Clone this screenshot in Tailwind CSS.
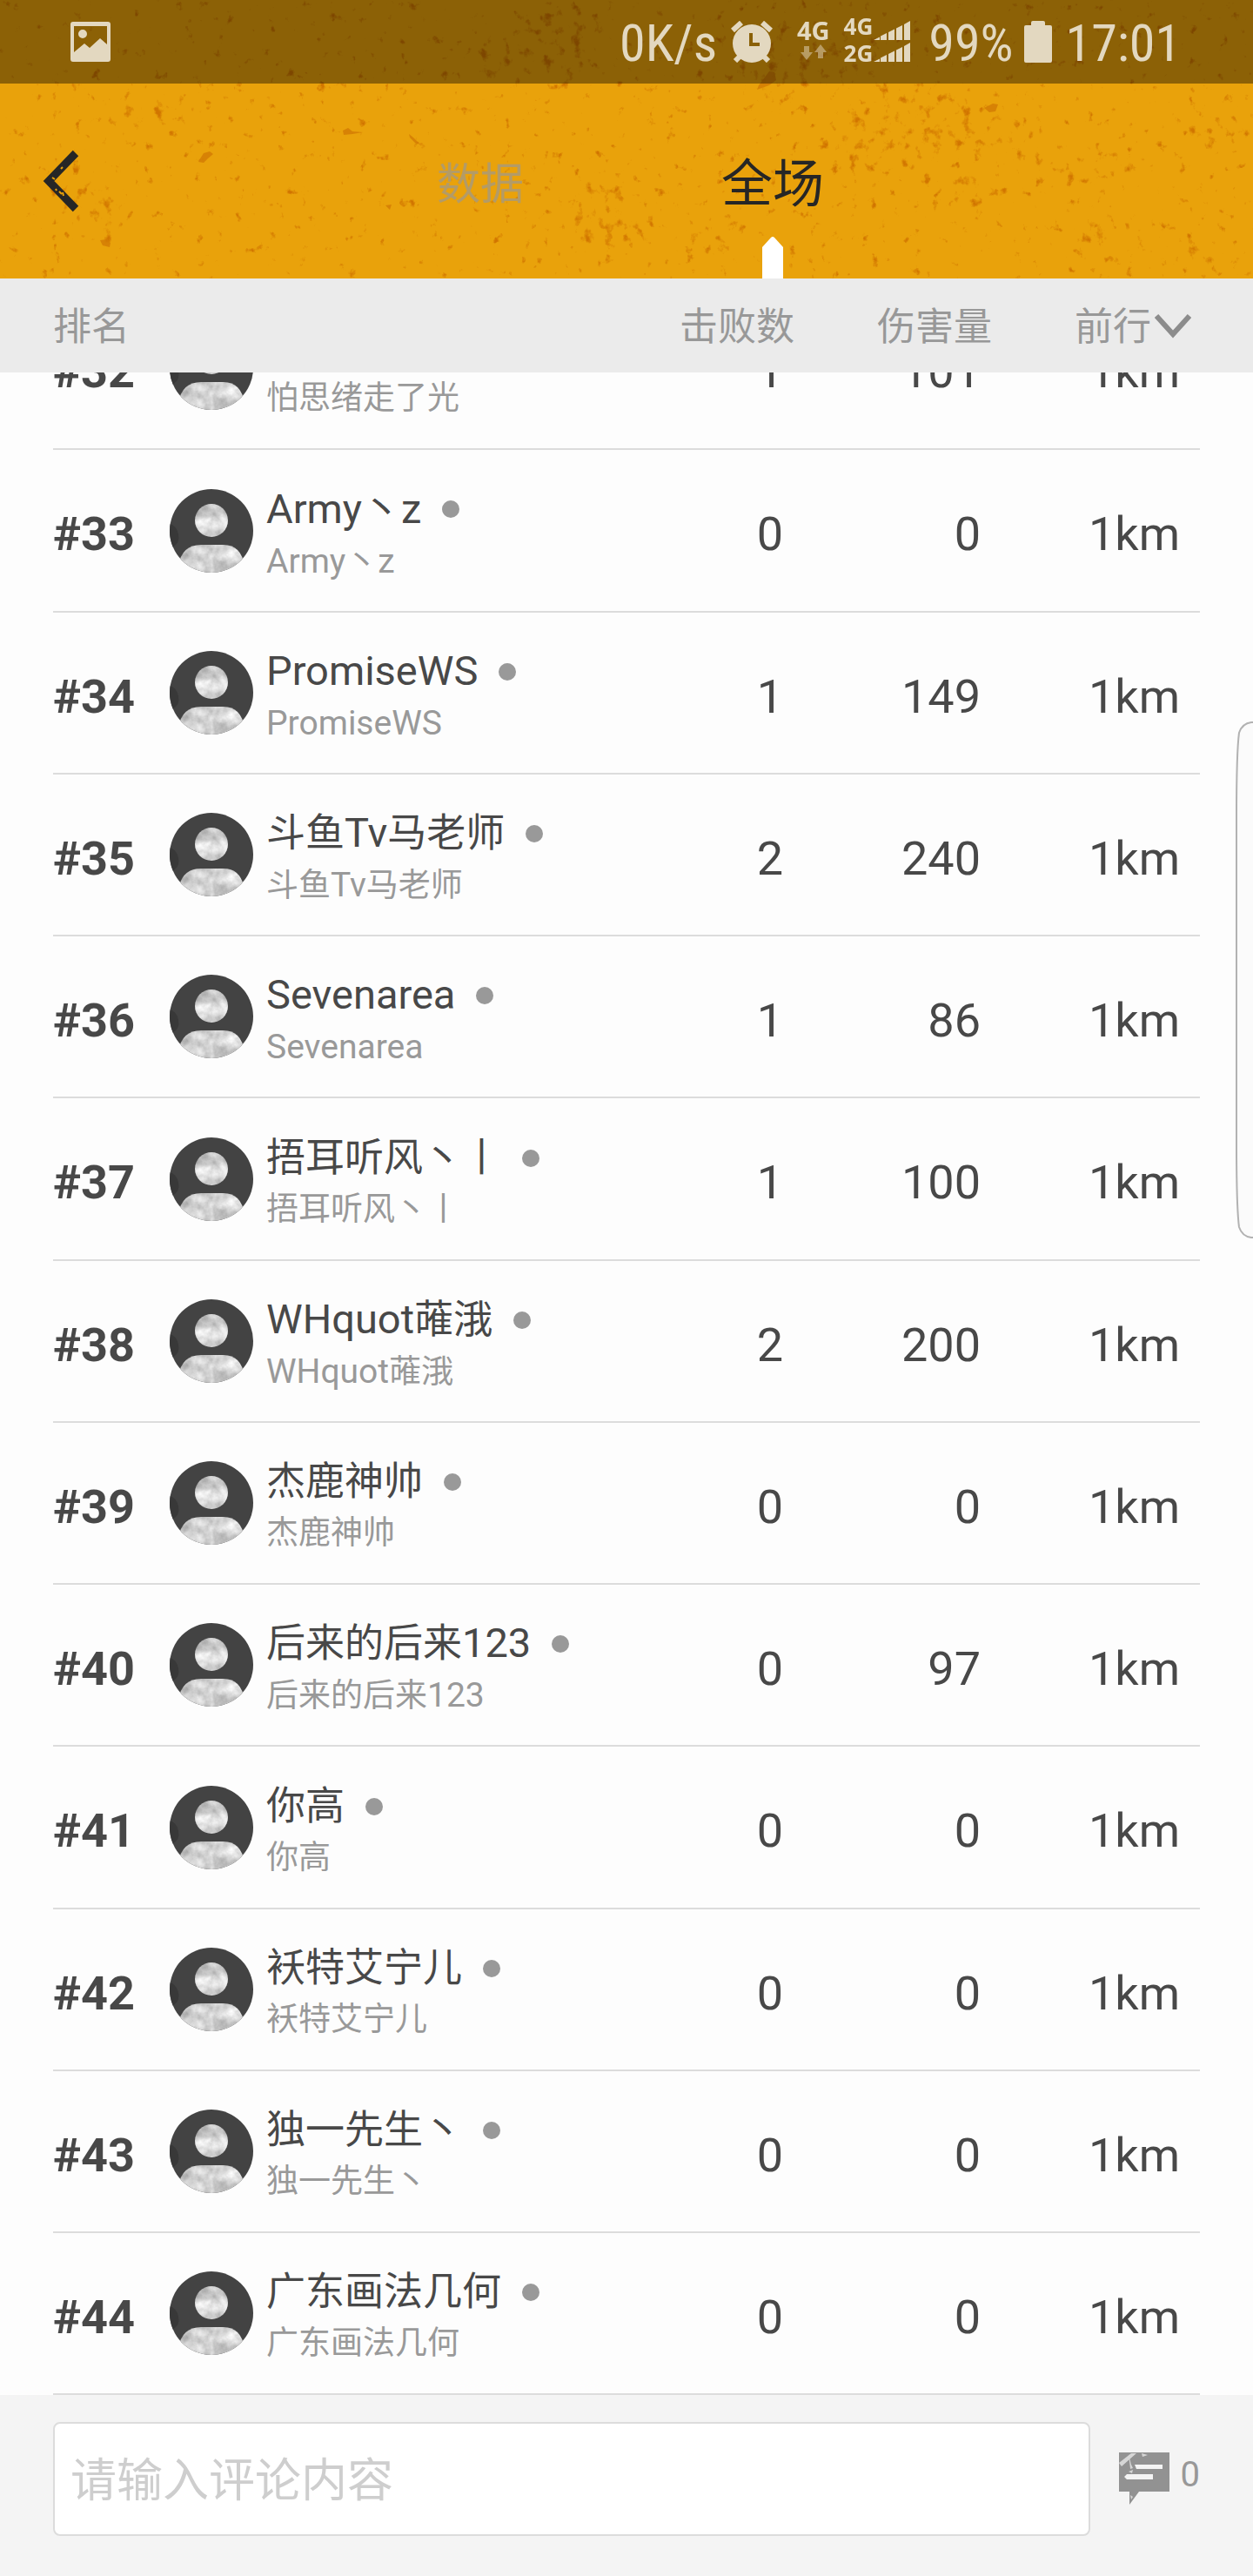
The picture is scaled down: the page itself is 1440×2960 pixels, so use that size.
<!DOCTYPE html>
<html lang="zh-CN">
<head>
  <meta charset="UTF-8" />
  <meta name="viewport" content="width=device-width, initial-scale=1.0" />
  <title>全场</title>
  <script src="https://cdn.jsdelivr.net/npm/@tailwindcss/browser@4"></script>
</head>
<body class="h-screen flex flex-col overflow-hidden bg-[#fdfdfd] text-[#484848] font-['Roboto','Noto_Sans_CJK_SC',sans-serif]">

  <!-- Header Start -->
  <header class="relative shrink-0 bg-[#e9a20b]">
    <!-- grunge texture: the ellipses mark where the scratches are denser -->
    <svg class="absolute inset-0 w-full h-full" viewBox="0 0 1440 320" preserveAspectRatio="none" aria-hidden="true">
      <filter id="grunge" filterUnits="userSpaceOnUse" x="0" y="0" width="1440" height="320" color-interpolation-filters="sRGB">
        <feGaussianBlur in="SourceGraphic" stdDeviation="12" result="density" />
        <feTurbulence type="fractalNoise" baseFrequency="0.085 0.075" numOctaves="4" seed="8" result="fine" />
        <feComposite in="fine" in2="density" operator="arithmetic" k1="0" k2="1" k3="0.2" k4="0" />
        <feColorMatrix type="matrix" values="0 0 0 0 0.82  0 0 0 0 0.46  0 0 0 0 0  6 0 0 0 -4.2" />
      </filter>
      <g filter="url(#grunge)" fill="#fff">
        <ellipse cx="1035" cy="150" rx="80" ry="50" transform="rotate(-20 1035 150)" />
        <ellipse cx="1125" cy="152" rx="70" ry="22" transform="rotate(12 1125 152)" />
        <ellipse cx="1250" cy="195" rx="80" ry="18" />
        <ellipse cx="1120" cy="215" rx="40" ry="20" />
        <ellipse cx="885" cy="75" rx="40" ry="50" />
        <ellipse cx="960" cy="70" rx="40" ry="30" />
        <ellipse cx="640" cy="50" rx="50" ry="50" />
        <ellipse cx="570" cy="70" rx="40" ry="20" />
        <ellipse cx="100" cy="235" rx="50" ry="26" transform="rotate(25 100 235)" />
        <ellipse cx="180" cy="125" rx="70" ry="14" />
        <ellipse cx="700" cy="245" rx="50" ry="46" />
        <ellipse cx="820" cy="270" rx="34" ry="22" />
        <ellipse cx="1260" cy="275" rx="34" ry="26" />
        <ellipse cx="1400" cy="150" rx="40" ry="24" />
        <ellipse cx="1380" cy="295" rx="40" ry="14" />
      </g>
      <g fill="#d27a04" fill-opacity="0.8">
        <path d="M229 184l5-8 7-2 4 3-6 5-5 5-6-1zM394 150l6-3 5 4 12 1-12 2-10 1zM115 276l8-1 4 4-1 5-8-2zM470 154l5 4 8 8-6-2-6-6zM443 236l7-1-2 6zM1131 124l10-5 6 1-3 8-7 1zM872 98l12-16 6 1 2 9-8 6-14 5z" />
      </g>
    </svg>

    <!-- Status bar -->
    <div class="relative h-24 bg-black/40 flex items-center pl-20 pr-[83px] text-[#e3d8c0] text-[60px] leading-none font-['Roboto_Condensed','Roboto',sans-serif]">
      <svg class="w-12 h-12" viewBox="0 0 48 48" fill="currentColor">
        <path fill-rule="evenodd" d="M4 1h40a3 3 0 0 1 3 3v40a3 3 0 0 1-3 3H4a3 3 0 0 1-3-3V4a3 3 0 0 1 3-3zM5 6v30l12-10 6 5 12-11 8 7V6zM15 10a5 5 0 1 1 0 10a5 5 0 0 1 0-10z" />
      </svg>
      <span class="ml-auto pt-1">0K/s</span>
      <!-- alarm -->
      <svg class="ml-4 w-12 h-12" viewBox="0 0 48 48" fill="none" stroke="currentColor" stroke-width="6">
        <path d="M2 11 12 2M36 2l10 9M5 46l8-8M43 46l-8-8" />
        <circle cx="24" cy="26" r="22" fill="currentColor" stroke="none" />
        <path d="M23 14v13h10" stroke="#8a6007" stroke-width="4" />
      </svg>
      <!-- mobile signal, two SIMs -->
      <div class="ml-7 pb-2 flex flex-col items-center font-['Noto_Sans'] font-bold text-[29px]">
        <span class="leading-8">4G</span>
        <svg class="w-[30px] h-[18px] opacity-50" viewBox="0 0 30 18" fill="currentColor">
          <path d="M4 2h6v7h4l-7 9-7-9h4zM20 16V9h-4l7-9 7 9h-4v7z" />
        </svg>
      </div>
      <div class="ml-4 pb-1 flex flex-col font-['Noto_Sans'] font-bold text-[26px] leading-[31px]">
        <span>4G</span>
        <span>2G</span>
      </div>
      <svg class="w-[44px] h-12" viewBox="0 0 44 48" fill="currentColor">
        <path d="M1 22 8 18.500v3.500zM9 22v-4.500l7-3.500v8zM18 22v-9l7-3.500V22zM27 22V8.500l7-3.500v17zM36 22V4l7-4v22z" />
        <path d="M1 47 8 43.500v3.500zM9 47v-4.500l7-3.500v8zM18 47v-9l7-3.500V47zM27 47V33.500l7-3.500v17zM36 47V29l7-4v22z" />
      </svg>
      <span class="ml-5 pt-1">99%</span>
      <!-- battery -->
      <svg class="ml-3 w-8 h-12" viewBox="0 0 32 48" fill="currentColor"><path d="M10 0h12q2 0 2 2v3h6q2 0 2 2v39q0 2-2 2H2q-2 0-2-2V7q0-2 2-2h6V2q0-2 2-2z" /></svg>
      <span class="ml-4 pt-1">17:01</span>
    </div>

    <!-- Tabs -->
    <nav class="relative h-56 flex justify-center">
      <button id="backBtn" class="absolute left-12 inset-y-0" aria-label="返回">
        <svg class="w-11 h-[72px]" viewBox="0 0 44 72" fill="none" stroke="#262626" stroke-width="9">
          <path d="M39 4 8 36l31 32" />
          <path d="M12 32l3 2M22 22l2-2M20 48l3 3M25 53l-1-4M16 45l1 2" stroke="#e9a20b" stroke-width="2" />
        </svg>
      </button>
      <a href="#data" class="w-84 pt-2 flex items-center justify-center text-[50px] text-[#b39b67]">数据</a>
      <a href="#all" class="relative w-84 pt-2 flex items-center justify-center text-[59px] text-[#262626]" aria-current="page">全场
        <svg class="absolute bottom-0 w-6 h-12" viewBox="0 0 24 48" fill="#fff"><path d="M0 12 10 1q2-2 4 0l10 11v36H0z" /></svg>
      </a>
    </nav>
  </header>
  <!-- Header End -->

  <!-- Column titles -->
  <div class="shrink-0 h-27 pt-1 bg-[#ebebeb] pl-[61px] pr-[71px] flex items-center text-[44px] text-[#989898]">
    <span class="flex-1">排名</span>
    <span>击败数</span>
    <span class="w-[227px] text-right">伤害量</span>
    <button id="sortBtn" class="w-[229px] flex items-center justify-end gap-1">前行
      <svg class="w-[42px] h-8" viewBox="0 0 42 32" fill="none" stroke="#8c8c8c" stroke-width="6"><path d="M2 3l19 21L40 3" /></svg>
    </button>
  </div>

  <!-- Player list -->
  <main class="flex-1 min-h-0 overflow-hidden flex flex-col justify-end px-[61px]">
    <table class="w-full table-fixed border-collapse">
      <colgroup>
        <col class="w-[134px]" />
        <col class="w-[111px]" />
        <col />
        <col class="w-[120px]" />
        <col class="w-[227px]" />
        <col class="w-[252px]" />
      </colgroup>
      <tbody id="players"></tbody>
    </table>
  </main>

  <!-- Comment bar -->
  <footer class="shrink-0 h-52 bg-[#f4f4f4] px-[61px] pb-4 flex items-center">
    <input id="comment" type="text" aria-label="评论" placeholder="请输入评论内容"
      class="flex-1 h-[131px] pt-1.5 pl-[18px] border-2 border-[#dcdcdc] rounded-lg bg-white text-[53px] placeholder:text-[#cecece] focus:outline-none" />
    <button id="commentsBtn" class="ml-8 flex items-center gap-3 text-[40px] leading-none text-[#989898]" aria-label="0 条评论">
      <svg class="w-[60px] h-[60px]" viewBox="0 0 60 60" fill="#929292">
        <path d="M1 0h58v45H24L13 60V45H1z" />
        <path d="M19 14h32v5H21zM10 25h30v6H10l-3-3z" fill="#f4f4f4" />
        <path d="M1 12 15 1h6L4 16zM12 2l3 12 2 4-3 1zM27 1l7 2-6 2zM12 22l5-2-1 4zM14 49l3 2-2 3z" fill="#f4f4f4" fill-opacity="0.7" />
      </svg>
      <span class="pb-2">0</span>
    </button>
  </footer>

  <!-- Edge panel handle -->
  <svg class="fixed right-0 top-[829px] w-5 h-[594px]" viewBox="0 0 20 594" fill="#fbfbfb" stroke="#b2b2b2" stroke-width="2" aria-hidden="true">
    <path d="M24 1H18C10 2 6 7 4 13C2 28 1 60 1 110V484C1 534 2 566 4 581C6 587 10 592 18 593H24" />
  </svg>

  <!-- Default avatar -->
  <svg class="absolute w-0 h-0" aria-hidden="true">
    <filter id="stone" x="0" y="0" width="100%" height="100%" color-interpolation-filters="sRGB">
      <feTurbulence type="fractalNoise" baseFrequency="0.06" numOctaves="4" seed="5" />
      <feColorMatrix type="matrix" values="0.5 0 0 0 0.57  0.5 0 0 0 0.57  0.5 0 0 0 0.57  0 0 0 0 1" />
      <feComposite in2="SourceGraphic" operator="in" />
    </filter>
    <clipPath id="round"><circle cx="48" cy="48" r="48" /></clipPath>
    <symbol id="avatar" viewBox="0 0 96 96">
      <g clip-path="url(#round)">
        <rect width="96" height="96" fill="#434343" />
        <path d="M0 40q8 2 10 12t-6 14q-4 10-4 20z" fill="#383838" />
        <g filter="url(#stone)">
          <circle cx="48" cy="36" r="19" />
          <path d="M10 96V88Q14 64 36 64H62Q82 64 86 88V96z" />
        </g>
      </g>
    </symbol>
  </svg>

  <script>
    const players = [
      { rank: 32, name: '怕思绪走了光', kills: 1, damage: 101 },
      { rank: 33, name: 'Army丶z', kills: 0, damage: 0 },
      { rank: 34, name: 'PromiseWS', kills: 1, damage: 149 },
      { rank: 35, name: '斗鱼Tv马老师', kills: 2, damage: 240 },
      { rank: 36, name: 'Sevenarea', kills: 1, damage: 86 },
      { rank: 37, name: '捂耳听风丶丨', kills: 1, damage: 100 },
      { rank: 38, name: 'WHquot蓶涐', kills: 2, damage: 200 },
      { rank: 39, name: '杰鹿神帅', kills: 0, damage: 0 },
      { rank: 40, name: '后来的后来123', kills: 0, damage: 97 },
      { rank: 41, name: '你高', kills: 0, damage: 0 },
      { rank: 42, name: '袄特艾宁儿', kills: 0, damage: 0 },
      { rank: 43, name: '独一先生丶', kills: 0, damage: 0 },
      { rank: 44, name: '广东画法几何', kills: 0, damage: 0 },
    ];

    // Latin letters run a little larger than the Chinese ones
    function latin(name, cls) {
      return name.replace(/[A-Za-z0-9]+/g, (s) => `<span class="${cls}">${s}</span>`);
    }

    document.getElementById('players').innerHTML = players.map((p) => `
      <tr class="h-[186px] nth-[4n+2]:h-[187px] border-b-2 border-[#dcdcdc] text-[54px]">
        <th scope="row" class="p-0 pt-2 text-left font-bold">#${p.rank}</th>
        <td class="p-0"><svg class="w-24 h-24"><use href="#avatar" /></svg></td>
        <td class="p-0 pt-2 whitespace-nowrap">
          <div class="flex items-center gap-6 text-[45px] leading-[62px]">
            <span>${latin(p.name, 'text-[47px]')}</span>
            <i class="w-5 h-5 rounded-full bg-[#999]"></i>
          </div>
          <div class="text-[37px] leading-[56px] text-[#999]">${latin(p.name, 'text-[39px]')}</div>
        </td>
        <td class="p-0 pt-2 text-right">${p.kills}</td>
        <td class="p-0 pt-2 text-right">${p.damage}</td>
        <td class="p-0 pt-2 pr-[23px] text-right">1km</td>
      </tr>`).join('');
  </script>
</body>
</html>
